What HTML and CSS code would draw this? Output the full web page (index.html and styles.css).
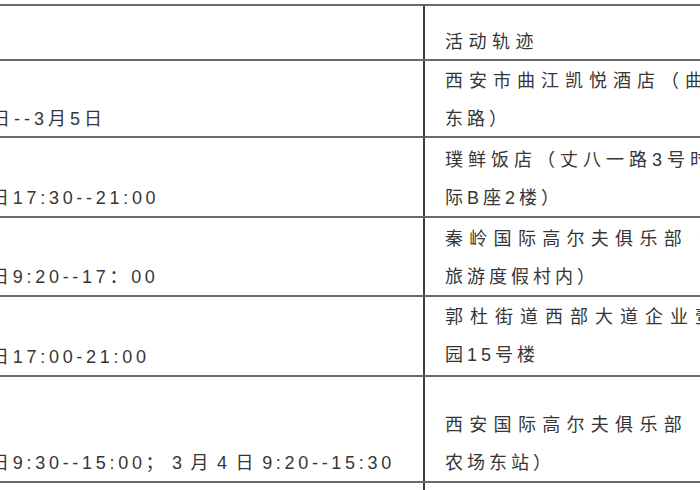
FILE: index.html
```html
<!DOCTYPE html>
<html lang="zh-CN">
<head>
<meta charset="utf-8">
<title>活动轨迹</title>
<link rel="stylesheet" href="styles.css">
</head>
<body>
<div class="sheet">
  <div class="row head">
    <div class="c1"></div>
    <div class="c2"><div class="ln h">活动轨迹</div></div>
  </div>
  <div class="row r2">
    <div class="c1"><div class="ln">3月1日--3月5日</div></div>
    <div class="c2"><div class="ln j24">西安市曲江凯悦酒店（曲江池西路）</div><div class="ln">东路）</div></div>
  </div>
  <div class="row r3">
    <div class="c1"><div class="ln num">3月1日17:30--21:00</div></div>
    <div class="c2"><div class="ln j23">璞鲜饭店（丈八一路3号时代国</div><div class="ln">际B座2楼）</div></div>
  </div>
  <div class="row r4">
    <div class="c1"><div class="ln num">3月2日9:20--17：00</div></div>
    <div class="c2"><div class="ln j243">秦岭国际高尔夫俱乐部（秦岭</div><div class="ln">旅游度假村内）</div></div>
  </div>
  <div class="row r5">
    <div class="c1"><div class="ln num">3月2日17:00-21:00</div></div>
    <div class="c2"><div class="ln j25">郭杜街道西部大道企业壹号公</div><div class="ln">园15号楼</div></div>
  </div>
  <div class="row r6">
    <div class="c1"><div class="ln num">3月3日9:30--15:00<span class="wide">；3月4日</span>9:20--15:30</div></div>
    <div class="c2"><div class="ln j243">西安国际高尔夫俱乐部（西安</div><div class="ln">农场东站）</div></div>
  </div>
  <div class="row r7">
    <div class="c1"></div>
    <div class="c2"></div>
  </div>
</div>
</body>
</html>
```
FILE: styles.css
```css
html, body {
  margin: 0;
  padding: 0;
  background: #ffffff;
  overflow: hidden;
}

body {
  width: 700px;
  height: 490px;
  font-family: "Liberation Sans", "Noto Sans CJK SC", sans-serif;
  font-size: 18px;
  color: #363636;
  letter-spacing: 4px;
}

.sheet {
  margin-top: 4px;
  margin-left: -78px;
  width: 905px;
  border-top: 2px solid #6a6a6a;
}

.row {
  display: grid;
  grid-template-columns: 501px 402px;
  border-bottom: 2px solid #6a6a6a;
}

.head { height: 53px; }
.r2 { height: 75px; }
.r3 { height: 78px; }
.r4 { height: 77px; }
.r5 { height: 78px; }
.r6 { height: 104px; }
.r7 { height: 30px; }

.c1,
.c2 {
  display: flex;
  flex-direction: column;
  justify-content: flex-end;
  white-space: nowrap;
}

.c1 {
  padding-left: 20px;
}

.c2 {
  border-left: 2px solid #3c3c3c;
  padding-left: 20px;
}

.ln {
  line-height: 40px;
  height: 38px;
}

.num { letter-spacing: 3.7px; }
.num .wide { letter-spacing: 8.5px; }

.r5 .c2 { padding-bottom: 2px; }

.h { letter-spacing: 5.5px; line-height: 42px; }
.j23 { letter-spacing: 5px; }
.j24 { letter-spacing: 6px; }
.j243 { letter-spacing: 6.3px; }
.j25 { letter-spacing: 7px; }
```
